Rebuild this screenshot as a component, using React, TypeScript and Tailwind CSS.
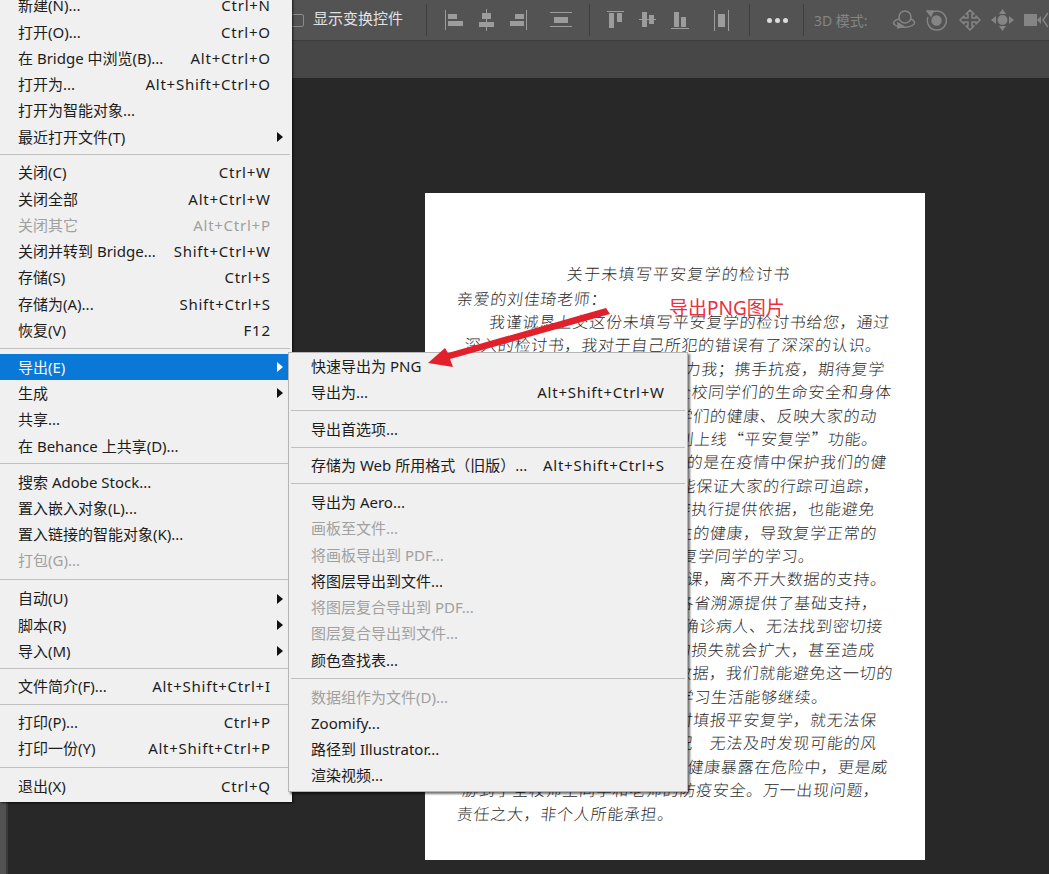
type MenuEntry =
  | { sep: string }
  | { label: string; shortcut?: string; disabled?: boolean; active?: boolean; sub?: boolean };

const mainMenu: MenuEntry[] = [
  { label: '新建(N)...', shortcut: 'Ctrl+N' },
  { label: '打开(O)...', shortcut: 'Ctrl+O' },
  { label: '在 Bridge 中浏览(B)...', shortcut: 'Alt+Ctrl+O' },
  { label: '打开为...', shortcut: 'Alt+Shift+Ctrl+O' },
  { label: '打开为智能对象...' },
  { label: '最近打开文件(T)', sub: true },
  { sep: 'h-[9.5px]' },
  { label: '关闭(C)', shortcut: 'Ctrl+W' },
  { label: '关闭全部', shortcut: 'Alt+Ctrl+W' },
  { label: '关闭其它', shortcut: 'Alt+Ctrl+P', disabled: true },
  { label: '关闭并转到 Bridge...', shortcut: 'Shift+Ctrl+W' },
  { label: '存储(S)', shortcut: 'Ctrl+S' },
  { label: '存储为(A)...', shortcut: 'Shift+Ctrl+S' },
  { label: '恢复(V)', shortcut: 'F12' },
  { sep: 'h-[10.75px]' },
  { label: '导出(E)', sub: true, active: true },
  { label: '生成', sub: true },
  { label: '共享...' },
  { label: '在 Behance 上共享(D)...' },
  { sep: 'h-[9.75px]' },
  { label: '搜索 Adobe Stock...' },
  { label: '置入嵌入对象(L)...' },
  { label: '置入链接的智能对象(K)...' },
  { label: '打包(G)...', disabled: true },
  { sep: 'h-[11.75px]' },
  { label: '自动(U)', sub: true },
  { label: '脚本(R)', sub: true },
  { label: '导入(M)', sub: true },
  { sep: 'h-[8.75px]' },
  { label: '文件简介(F)...', shortcut: 'Alt+Shift+Ctrl+I' },
  { sep: 'h-[9.75px]' },
  { label: '打印(P)...', shortcut: 'Ctrl+P' },
  { label: '打印一份(Y)', shortcut: 'Alt+Shift+Ctrl+P' },
  { sep: 'h-[11.75px]' },
  { label: '退出(X)', shortcut: 'Ctrl+Q' },
];

const exportMenu: MenuEntry[] = [
  { label: '快速导出为 PNG' },
  { label: '导出为...', shortcut: 'Alt+Shift+Ctrl+W' },
  { sep: 'h-[10.75px]' },
  { label: '导出首选项...' },
  { sep: 'h-[9.75px]' },
  { label: '存储为 Web 所用格式（旧版）...', shortcut: 'Alt+Shift+Ctrl+S' },
  { sep: 'h-[10.75px]' },
  { label: '导出为 Aero...' },
  { label: '画板至文件...', disabled: true },
  { label: '将画板导出到 PDF...', disabled: true },
  { label: '将图层导出到文件...' },
  { label: '将图层复合导出到 PDF...', disabled: true },
  { label: '图层复合导出到文件...', disabled: true },
  { label: '颜色查找表...' },
  { sep: 'h-[10.75px]' },
  { label: '数据组作为文件(D)...', disabled: true },
  { label: 'Zoomify...' },
  { label: '路径到 Illustrator...' },
  { label: '渲染视频...' },
];

const letterLines: { text: string; pad: string }[] = [
  { text: '我谨诚恳上交这份未填写平安复学的检讨书给您，通过', pad: 'pr-[35px]' },
  { text: '深入的检讨书，我对于自己所犯的错误有了深深的认识。', pad: 'pr-[43px]' },
  { text: '疫情当前，全民战疫，众志成城助力我；携手抗疫，期待复学', pad: 'pr-[40px]' },
  { text: '平安复学关系到全校同学们的生命安全和身体', pad: 'pr-[33px]' },
  { text: '及时掌握同学们的健康、反映大家的动', pad: 'pr-[48px]' },
  { text: '学校为此特别上线“平安复学”功能。', pad: 'pr-[47px]' },
  { text: '这个功能的目的是在疫情中保护我们的健', pad: 'pr-[38px]' },
  { text: '每日填报才能保证大家的行踪可追踪，', pad: 'pr-[45px]' },
  { text: '也能为防疫工作执行提供依据，也能避免', pad: 'pr-[50px]' },
  { text: '影响全校师生的健康，导致复学正常的', pad: 'pr-[48px]' },
  { text: '打乱老师教学和复学同学的学习。', pad: 'pr-[110px]' },
  { text: '学校能顺利复课，离不开大数据的支持。', pad: 'pr-[38px]' },
  { text: '每日填报能为各省溯源提供了基础支持，', pad: 'pr-[47px]' },
  { text: '如果出现疑似或确诊病人、无法找到密切接', pad: 'pr-[42px]' },
  { text: '疫情扩散造成的损失就会扩大，甚至造成', pad: 'pr-[50px]' },
  { text: '只要每天上报数据，我们就能避免这一切的', pad: 'pr-[32px]' },
  { text: '让同学们的学习生活能够继续。', pad: 'pr-[97px]' },
  { text: '如果我们不按时填报平安复学，就无法保', pad: 'pr-[48px]' },
  { text: '证自身健康情况　无法及时发现可能的风', pad: 'pr-[48px]' },
  { text: '不仅把自己的健康暴露在危险中，更是威', pad: 'pr-[37px]' },
  { text: '胁到了全校师生同学和老师的防疫安全。万一出现问题，', pad: 'pr-[45px]' },
];

function MenuList({ items, inset }: { items: MenuEntry[]; inset?: boolean }) {
  return (
    <>
      {items.map((item, i) => {
        if ('sep' in item) {
          return (
            <div key={i} className={`flex items-center ${item.sep} ${inset ? 'px-[2px]' : 'pr-[2px]'}`}>
              <div className="h-px w-full bg-[#c0c0c0]" />
            </div>
          );
        }
        return (
          <div
            key={i}
            className={`relative flex h-[26.25px] items-center justify-between whitespace-nowrap ${
              inset ? 'pl-[22px] pr-[23px]' : 'pl-[18px] pr-[22px]'
            } ${item.active ? 'bg-[#0a78d7] text-[#f4f9ff]' : item.disabled ? 'text-[#a0a0a0]' : 'text-[#1c1c1c]'}`}
          >
            <span>{item.label}</span>
            {item.shortcut && <span className="-mr-[0.75px] tracking-[0.75px]">{item.shortcut}</span>}
            {item.sub && (
              <svg className="absolute right-[9px] top-[8px]" width="6" height="10" viewBox="0 0 6 10">
                <path d="M0 0L6 5L0 10Z" fill={item.active ? '#ffffff' : '#111111'} />
              </svg>
            )}
          </div>
        );
      })}
    </>
  );
}

function ToolbarSep({ className }: { className: string }) {
  return <div className={`h-[32px] w-px shrink-0 bg-[#3f3f3f] ${className}`} />;
}

function AlignIcons() {
  const c = '#9c9c9c';
  return (
    <>
      <svg className="ml-[18px] shrink-0" width="19" height="22" viewBox="0 0 19 22">
        <rect x="0" y="1" width="1" height="20" fill={c} />
        <rect x="3" y="5" width="9" height="5" fill={c} />
        <rect x="3" y="12" width="15" height="5" fill={c} />
      </svg>
      <svg className="ml-[15px] shrink-0" width="15" height="22" viewBox="0 0 15 22">
        <rect x="7" y="0" width="1" height="22" fill={c} />
        <rect x="3" y="4" width="9" height="6" fill={c} />
        <rect x="0" y="13" width="15" height="5" fill={c} />
      </svg>
      <svg className="ml-[16px] shrink-0" width="17" height="22" viewBox="0 0 17 22">
        <rect x="16" y="1" width="1" height="20" fill={c} />
        <rect x="5" y="5" width="9" height="5" fill={c} />
        <rect x="0" y="12" width="14" height="5" fill={c} />
      </svg>
      <svg className="ml-[23px] shrink-0" width="22" height="16" viewBox="0 0 22 16">
        <rect x="0" y="0" width="22" height="1" fill={c} />
        <rect x="4" y="5" width="14" height="6" fill={c} />
        <rect x="0" y="14" width="22" height="1" fill={c} />
      </svg>
    </>
  );
}

function DistributeIcons() {
  const c = '#9c9c9c';
  return (
    <>
      <svg className="ml-[17px] shrink-0" width="17" height="18" viewBox="0 0 17 18">
        <rect x="0" y="0" width="17" height="1" fill={c} />
        <rect x="2" y="2" width="5" height="15" fill={c} />
        <rect x="10" y="2" width="5" height="9" fill={c} />
      </svg>
      <svg className="ml-[15px] shrink-0" width="17" height="16" viewBox="0 0 17 16">
        <rect x="0" y="7" width="17" height="1" fill={c} />
        <rect x="3" y="0" width="5" height="15" fill={c} />
        <rect x="10" y="3" width="5" height="9" fill={c} />
      </svg>
      <svg className="ml-[15px] shrink-0" width="18" height="17" viewBox="0 0 18 17">
        <rect x="3" y="0" width="5" height="15" fill={c} />
        <rect x="10" y="5" width="5" height="10" fill={c} />
        <rect x="0" y="16" width="18" height="1" fill={c} />
      </svg>
      <svg className="ml-[25px] shrink-0" width="15" height="23" viewBox="0 0 15 23">
        <rect x="0" y="1" width="1" height="21" fill={c} />
        <rect x="4" y="5" width="7" height="13" fill={c} />
        <rect x="14" y="1" width="1" height="21" fill={c} />
      </svg>
    </>
  );
}

function ThreeDIcons() {
  const c = '#858585';
  return (
    <>
      <svg className="ml-[20px] shrink-0" width="24" height="22" viewBox="0 0 24 22" fill="none" stroke={c} strokeWidth="1.5">
        <circle cx="13" cy="8" r="6" />
        <path d="M7 10C2 11 0 14 3 16C7 19 17 19 21 16C24 14 22 11 19 10" />
        <path d="M6 14L6 19L11 17Z" fill={c} />
      </svg>
      <svg className="ml-[10px] shrink-0" width="21" height="22" viewBox="0 0 21 22" fill="none" stroke={c} strokeWidth="1.5">
        <path d="M5 4A9.5 9.5 0 1 1 2 8" />
        <path d="M1 2L7 2L5 7Z" fill={c} />
        <circle cx="10.5" cy="11.5" r="4.5" fill={c} />
      </svg>
      <svg className="ml-[12px] shrink-0" width="22" height="22" viewBox="0 0 22 22" fill="none" stroke={c} strokeWidth="1.5" strokeLinejoin="round">
        <path d="M11 1L15 5H13V9H17V7L21 11L17 15V13H13V17H15L11 21L7 17H9V13H5V15L1 11L5 7V9H9V5H7Z" />
      </svg>
      <svg className="ml-[10px] shrink-0" width="23" height="22" viewBox="0 0 23 22" fill={c}>
        <path d="M11.5 0L15 5H8Z" />
        <path d="M11.5 22L8 17H15Z" />
        <path d="M0 11L5 7V15Z" />
        <path d="M23 11L18 7V15Z" />
        <circle cx="11.5" cy="11" r="5" />
      </svg>
      <svg className="ml-[10px] shrink-0" width="24" height="16" viewBox="0 0 24 16" fill={c}>
        <rect x="0" y="2" width="13" height="12" />
        <path d="M13 8L17 4V12Z" />
        <path d="M24 1L19 8L24 15" fill="none" stroke={c} strokeWidth="1.5" />
      </svg>
    </>
  );
}

export default function App() {
  return (
    <div className="relative flex h-[874px] w-[1049px] flex-col overflow-hidden bg-[#282828] font-['Noto_Sans','Noto_Sans_CJK_SC',sans-serif] text-[15px]">
      {/* Options bar */}
      <div className="flex h-[41px] shrink-0 items-center border-b border-[#3c3c3c] bg-[#535353] pl-[291px]">
        <div className="h-[13px] w-[13px] shrink-0 rounded-[2px] border border-[#8a8a8a]" />
        <span className="-mt-[3px] ml-[9px] w-[90px] shrink-0 whitespace-nowrap text-[#e2e2e2]">显示变换控件</span>
        <ToolbarSep className="ml-[23px]" />
        <AlignIcons />
        <ToolbarSep className="ml-[17px]" />
        <DistributeIcons />
        <ToolbarSep className="ml-[20px]" />
        <div className="ml-[17px] flex w-[21px] shrink-0 justify-between">
          <div className="h-[5px] w-[5px] rounded-full bg-[#dcdcdc]" />
          <div className="h-[5px] w-[5px] rounded-full bg-[#dcdcdc]" />
          <div className="h-[5px] w-[5px] rounded-full bg-[#dcdcdc]" />
        </div>
        <ToolbarSep className="ml-[15px]" />
        <span className="ml-[10px] w-[58px] shrink-0 whitespace-nowrap text-[14px] text-[#858585]">3D 模式:</span>
        <ThreeDIcons />
      </div>

      {/* Tab strip */}
      <div className="h-[37px] shrink-0 bg-[#474747]" />

      {/* Canvas */}
      <div className="flex min-h-0 flex-1">
        <div className="w-[8px] shrink-0 border-r-2 border-[#3a3a3a] bg-[#525252]" />
        <div className="ml-[417px] mt-[115px] h-[667px] w-[500px] shrink-0 overflow-hidden bg-white pt-[68.6px] pl-[32px] font-['Noto_Sans_CJK_SC',sans-serif] text-[16px] font-light leading-[23.4px] tracking-[0.7px] text-[#2a2a2a]">
          <div className="mb-[1.6px] whitespace-nowrap pl-[110px] tracking-[1.2px] -skew-x-6">关于未填写平安复学的检讨书</div>
          <div className="whitespace-nowrap -skew-x-6">亲爱的刘佳琦老师：</div>
          {letterLines.map((line) => (
            <div key={line.text} className={`-ml-[32px] whitespace-nowrap text-right -skew-x-6 ${line.pad}`}>
              {line.text}
            </div>
          ))}
          <div className="whitespace-nowrap -skew-x-6">责任之大，非个人所能承担。</div>
        </div>
      </div>

      {/* File menu */}
      <div className="absolute left-0 top-[-7.5px] w-[292px] bg-[#f0f0f0] pb-[2.5px] shadow-[1px_1px_2px_rgba(0,0,0,0.7)]">
        <MenuList items={mainMenu} />
      </div>

      {/* Export submenu */}
      <div className="absolute left-[288px] top-[352px] w-[400px] border border-[#b5b5b5] bg-[#f0f0f0] pb-[2px] shadow-[2px_2px_2px_rgba(0,0,0,0.55)]">
        <MenuList items={exportMenu} inset />
      </div>

      {/* Annotation */}
      <span className="absolute left-[669px] top-[296px] whitespace-nowrap text-[19px] leading-[24px] text-[#e8303f]">导出PNG图片</span>
      <svg className="pointer-events-none absolute left-0 top-0" width="1049" height="874" viewBox="0 0 1049 874">
        <path d="M428 363L445 348L448 353L606 308L610 314L450 359L453 367Z" fill="#e2202c" />
      </svg>
    </div>
  );
}
